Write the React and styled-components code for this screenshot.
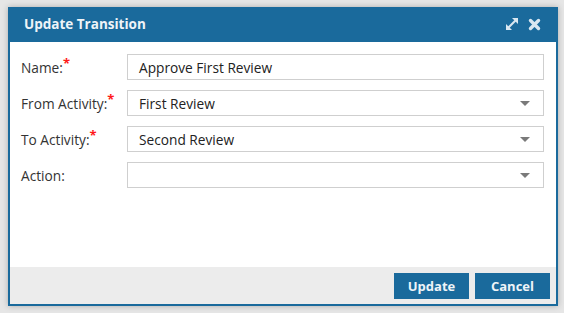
import React from 'react';
import styled, { createGlobalStyle } from 'styled-components';

const GlobalStyle = createGlobalStyle`
  html, body {
    margin: 0;
    padding: 0;
    background: #e6e6e6;
    font-family: 'Open Sans', 'Noto Sans', sans-serif;
  }
`;

const Page = styled.div`
  padding: 7px 0 0 8px;
  height: 313px;
  box-sizing: border-box;
`;

const Dialog = styled.div`
  width: 550px;
  height: 299px;
  box-sizing: border-box;
  border: 2px solid #1a6a9c;
  background: #fff;
  display: flex;
  flex-direction: column;
  box-shadow: 0 0 6px rgba(0, 0, 0, 0.25);
`;

const Header = styled.div`
  height: 35px;
  box-sizing: border-box;
  margin-top: -2px;
  padding: 0 15px 1px 14px;
  background: #1a6a9c;
  color: #eef4f8;
  display: flex;
  align-items: center;
  justify-content: space-between;
`;

const Title = styled.h1`
  margin: 0;
  font-size: 13.5px;
  font-weight: 700;
`;

const HeaderTools = styled.div`
  display: flex;
  align-items: center;
  gap: 9px;
`;

const Body = styled.div`
  flex: 1;
  padding: 12px 12px 0 11px;
  display: flex;
  flex-direction: column;
  gap: 10px;
`;

const Row = styled.div`
  display: flex;
  align-items: center;
  height: 26px;
`;

const Label = styled.label`
  width: 106px;
  font-size: 13.7px;
  color: #333;
  white-space: nowrap;
`;

const Required = styled.sup`
  color: #ff1a1a;
  font-size: 13px;
  font-weight: 700;
  line-height: 0;
  position: relative;
  top: 1px;
`;

const Field = styled.div`
  flex: 1;
  height: 26px;
  box-sizing: border-box;
  border: 1px solid #cfcfcf;
  display: flex;
  align-items: center;
  justify-content: space-between;
  padding: 0 13px 0 11px;
  font-size: 13.7px;
  color: #222;
`;

const Caret = styled.span`
  width: 0;
  height: 0;
  border-left: 5px solid transparent;
  border-right: 5px solid transparent;
  border-top: 5px solid #7a7a7a;
`;

const Footer = styled.div`
  height: 37px;
  box-sizing: border-box;
  background: #ececec;
  display: flex;
  justify-content: flex-end;
  align-items: flex-start;
  gap: 6px;
  padding: 6px 6px 0 0;
`;

const Button = styled.button`
  width: 75px;
  height: 26px;
  border: none;
  background: #1a6a9c;
  color: #eef4f8;
  font-family: 'Open Sans', 'Noto Sans', sans-serif;
  font-size: 13px;
  font-weight: 700;
  padding: 0;
  cursor: pointer;
`;

const ExpandIcon = () => (
  <svg width="14" height="14" viewBox="0 0 14 14">
    <line x1="3" y1="11" x2="11" y2="3" stroke="#d9e7f1" strokeWidth="2" />
    <polygon points="7,1 13,1 13,7" fill="#d9e7f1" />
    <polygon points="1,7 1,13 7,13" fill="#d9e7f1" />
  </svg>
);

const CloseIcon = () => (
  <svg width="13" height="13" viewBox="0 0 13 13">
    <path d="M2.5 2.5 L10.5 10.5 M10.5 2.5 L2.5 10.5" stroke="#d9e7f1" strokeWidth="3.4" strokeLinecap="round" />
  </svg>
);

const fields = [
  { label: 'Name:', required: true, value: 'Approve First Review' },
  { label: 'From Activity:', required: true, value: 'First Review', select: true },
  { label: 'To Activity:', required: true, value: 'Second Review', select: true },
  { label: 'Action:', required: false, value: '', select: true },
];

export default function App() {
  return (
    <Page>
      <GlobalStyle />
      <Dialog>
        <Header>
          <Title>Update Transition</Title>
          <HeaderTools>
            <ExpandIcon />
            <CloseIcon />
          </HeaderTools>
        </Header>
        <Body>
          {fields.map((f) => (
            <Row key={f.label}>
              <Label>
                {f.label}
                {f.required && <Required>*</Required>}
              </Label>
              <Field>
                <span>{f.value}</span>
                {f.select && <Caret />}
              </Field>
            </Row>
          ))}
        </Body>
        <Footer>
          <Button>Update</Button>
          <Button>Cancel</Button>
        </Footer>
      </Dialog>
    </Page>
  );
}
